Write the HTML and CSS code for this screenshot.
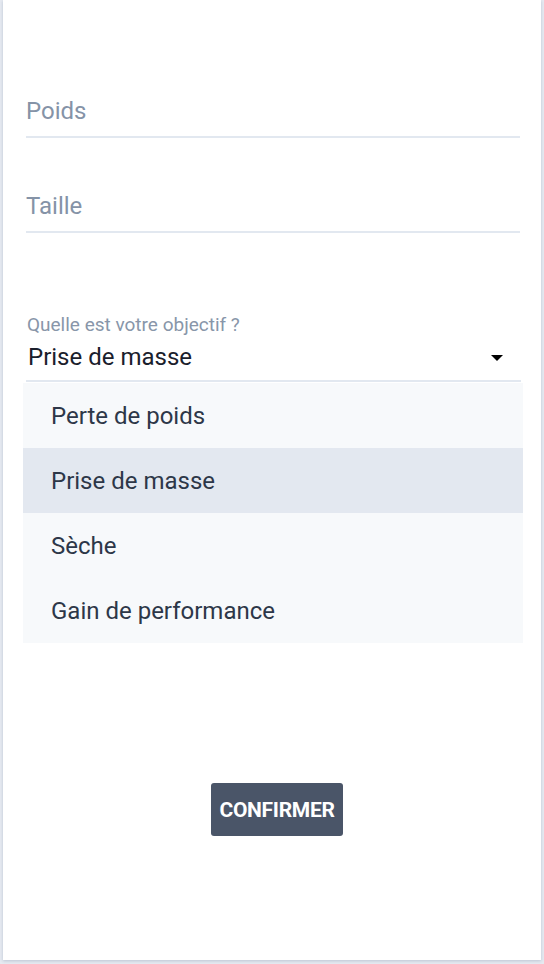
FILE: index.html
```html
<!DOCTYPE html>
<html lang="fr">
<head>
<meta charset="utf-8">
<title>Objectif</title>
<link rel="stylesheet" href="styles.css">
</head>
<body>
<div class="card">
  <form class="form">
    <div class="field field-first"><span class="placeholder">Poids</span></div>
    <div class="field field-second"><span class="placeholder">Taille</span></div>
    <div class="select-wrap">
      <div class="select-label">Quelle est votre objectif ?</div>
      <div class="select">
        <span class="select-value">Prise de masse</span>
        <svg class="caret" width="12" height="6" viewBox="0 0 12 6"><path d="M0 0 L12 0 L6 6 Z" fill="#000"/></svg>
      </div>
      <ul class="menu">
        <li class="item">Perte de poids</li>
        <li class="item active">Prise de masse</li>
        <li class="item">Sèche</li>
        <li class="item">Gain de performance</li>
      </ul>
    </div>
    <div class="actions">
      <button type="button" class="btn">CONFIRMER</button>
    </div>
  </form>
</div>
</body>
</html>
```
FILE: styles.css
```css
* { box-sizing: border-box; }
html, body { margin: 0; padding: 0; }
body {
  background: #e6eaf1;
  font-family: Roboto, "Noto Sans", "Liberation Sans", sans-serif;
  width: 544px;
  height: 964px;
  overflow: hidden;
}
.card {
  margin-left: 3px;
  width: 538px;
  height: 960px;
  background: #ffffff;
  box-shadow: 0 1px 3px rgba(160, 170, 190, 0.6);
  padding: 99px 20px 0 20px;
}
.form { display: flex; flex-direction: column; }
.field {
  margin: 0 1px 0 3px;
  border-bottom: 2px solid #e2e8f0;
  padding-bottom: 13px;
  line-height: 24px;
  font-size: 24px;
}
.field-second { margin-top: 56px; }
.placeholder { color: #8593a7; }
.select-wrap { margin-top: 82px; display: flex; flex-direction: column; }
.select-label {
  margin-left: 4px;
  font-size: 19px;
  line-height: 20px;
  color: #8896a9;
}
.select {
  margin: 10px 0 0 3px;
  display: flex;
  align-items: center;
  justify-content: space-between;
  border-bottom: 2px solid #e2e8f0;
  padding: 0 18px 11px 2px;
  line-height: 24px;
  font-size: 24px;
  color: #1a202c;
}
.caret { margin-top: 1px; }
.menu {
  list-style: none;
  margin: 1px 0 0 0;
  padding: 0;
  width: 500px;
  background: #f7f9fb;
}
.item {
  height: 65px;
  display: flex;
  align-items: center;
  padding-left: 28px;
  font-size: 24px;
  color: #2d3748;
}
.item.active { background: #e3e8f0; }
.actions {
  display: flex;
  justify-content: center;
  margin-top: 140px;
  padding-left: 10px;
}
.btn {
  width: 132px;
  height: 53px;
  background: #4a5568;
  color: #ffffff;
  border: none;
  border-radius: 3px;
  font-family: Roboto, "Liberation Sans", sans-serif;
  font-weight: 700;
  font-size: 21px;
  letter-spacing: -0.3px;
  padding: 0;
}
```
